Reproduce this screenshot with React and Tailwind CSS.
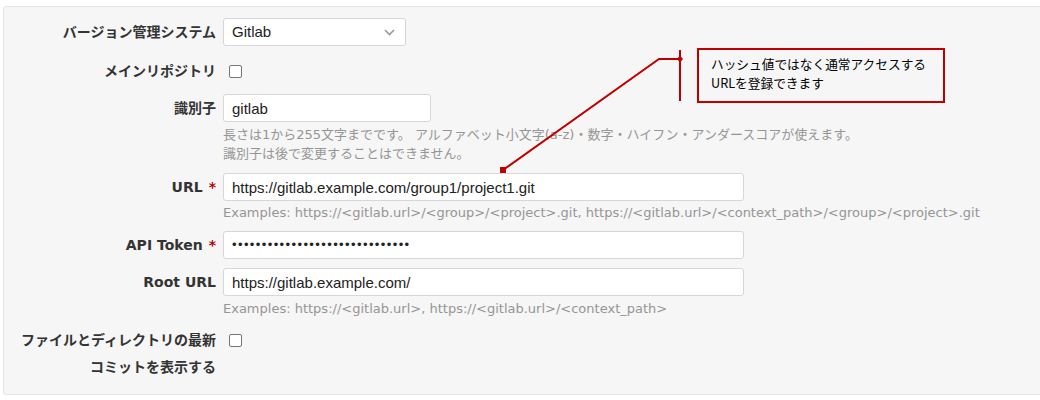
const labelCls =
  "w-[198px] ml-[14px] shrink-0 text-right font-bold text-[14px] text-[#333] [font-family:'DejaVu_Sans','Noto_Sans_CJK_JP',sans-serif]";
const inputCls =
  "h-[28px] rounded-[3px] border border-[#d7d7d7] bg-white pl-[8px] text-[15px] text-[#222] [font-family:'Liberation_Sans','Noto_Sans_CJK_JP',sans-serif] outline-none";
const helpCls =
  "ml-[219px] text-[13px] leading-[19px] text-[#959595] [font-family:'DejaVu_Sans','Noto_Sans_CJK_JP',sans-serif]";

function Row({ label, required, children, className = "" }) {
  return (
    <div className={`flex items-center ${className}`}>
      <div className={labelCls}>
        {label}
        {required && <span className="text-[#bb0000] ml-[6px]">*</span>}
      </div>
      <div className="ml-[7px] flex items-center">{children}</div>
    </div>
  );
}

function Checkbox() {
  return (
    <span className="ml-[6px] block w-[13px] h-[13px] rounded-[2px] border border-[#767676] bg-white" />
  );
}

export default function App() {
  return (
    <div className="relative w-[1040px] h-[400px] overflow-hidden bg-white">
      <div className="ml-[3px] mt-[6px] w-[1060px] h-[389px] rounded-[3px] border border-[#e4e4e4] bg-[#f6f6f6]">
        <Row label="バージョン管理システム" className="mt-[11px]">
          <div className={`${inputCls} w-[183px] flex items-center justify-between pr-[10px]`}>
            <span>Gitlab</span>
            <svg width="11" height="7" viewBox="0 0 11 7">
              <path d="M1 1l4.5 4.5L10 1" fill="none" stroke="#9a9a9a" strokeWidth="1.6" />
            </svg>
          </div>
        </Row>

        <Row label="メインリポジトリ" className="mt-[11px] h-[28px]">
          <Checkbox />
        </Row>

        <Row label="識別子" className="mt-[9px]">
          <input readOnly defaultValue="gitlab" className={`${inputCls} w-[208px]`} />
        </Row>
        <div className={`${helpCls} mt-[3px]`}>
          <p>長さは1から255文字までです。 アルファベット小文字(a-z)・数字・ハイフン・アンダースコアが使えます。</p>
          <p>識別子は後で変更することはできません。</p>
        </div>

        <Row label="URL" required className="mt-[10px]">
          <input
            readOnly
            defaultValue="https://gitlab.example.com/group1/project1.git"
            className={`${inputCls} w-[521px]`}
          />
        </Row>
        <p className={`${helpCls} mt-[2px]`}>
          Examples: https://&lt;gitlab.url&gt;/&lt;group&gt;/&lt;project&gt;.git, https://&lt;gitlab.url&gt;/&lt;context_path&gt;/&lt;group&gt;/&lt;project&gt;.git
        </p>

        <Row label="API Token" required className="mt-[9px]">
          <div className={`${inputCls} w-[521px] flex items-center`}>
            <span className="text-[13px] tracking-[1.4px]">{"•".repeat(30)}</span>
          </div>
        </Row>

        <Row label="Root URL" className="mt-[9px]">
          <input readOnly defaultValue="https://gitlab.example.com/" className={`${inputCls} w-[521px]`} />
        </Row>
        <p className={`${helpCls} mt-[3px]`}>
          Examples: https://&lt;gitlab.url&gt;, https://&lt;gitlab.url&gt;/&lt;context_path&gt;
        </p>

        <div className="flex items-start mt-[9px]">
          <div className={`${labelCls} leading-[27px]`}>ファイルとディレクトリの最新コミットを表示する</div>
          <div className="ml-[7px] h-[27px] flex items-center">
            <Checkbox />
          </div>
        </div>
      </div>

      <svg className="absolute left-0 top-0 pointer-events-none" width="1040" height="400">
        <polyline points="503,170 659,59 680,59" fill="none" stroke="#c00000" strokeWidth="2" />
        <line x1="680" y1="50" x2="680" y2="101" stroke="#c00000" strokeWidth="2" />
        <rect x="500" y="167" width="6" height="6" fill="#c00000" />
        <path d="M680 55.5l3 3.5-3 3.5-3-3.5z" fill="#c00000" />
      </svg>

      <div className="absolute left-[697px] top-[48px] w-[248px] h-[55px] border-2 border-[#c00000] pl-[12px] pt-[4px] text-[12.7px] leading-[19px] text-black [font-family:'Noto_Sans_CJK_JP',sans-serif]">
        <p>ハッシュ値ではなく通常アクセスする</p>
        <p>URLを登録できます</p>
      </div>
    </div>
  );
}
